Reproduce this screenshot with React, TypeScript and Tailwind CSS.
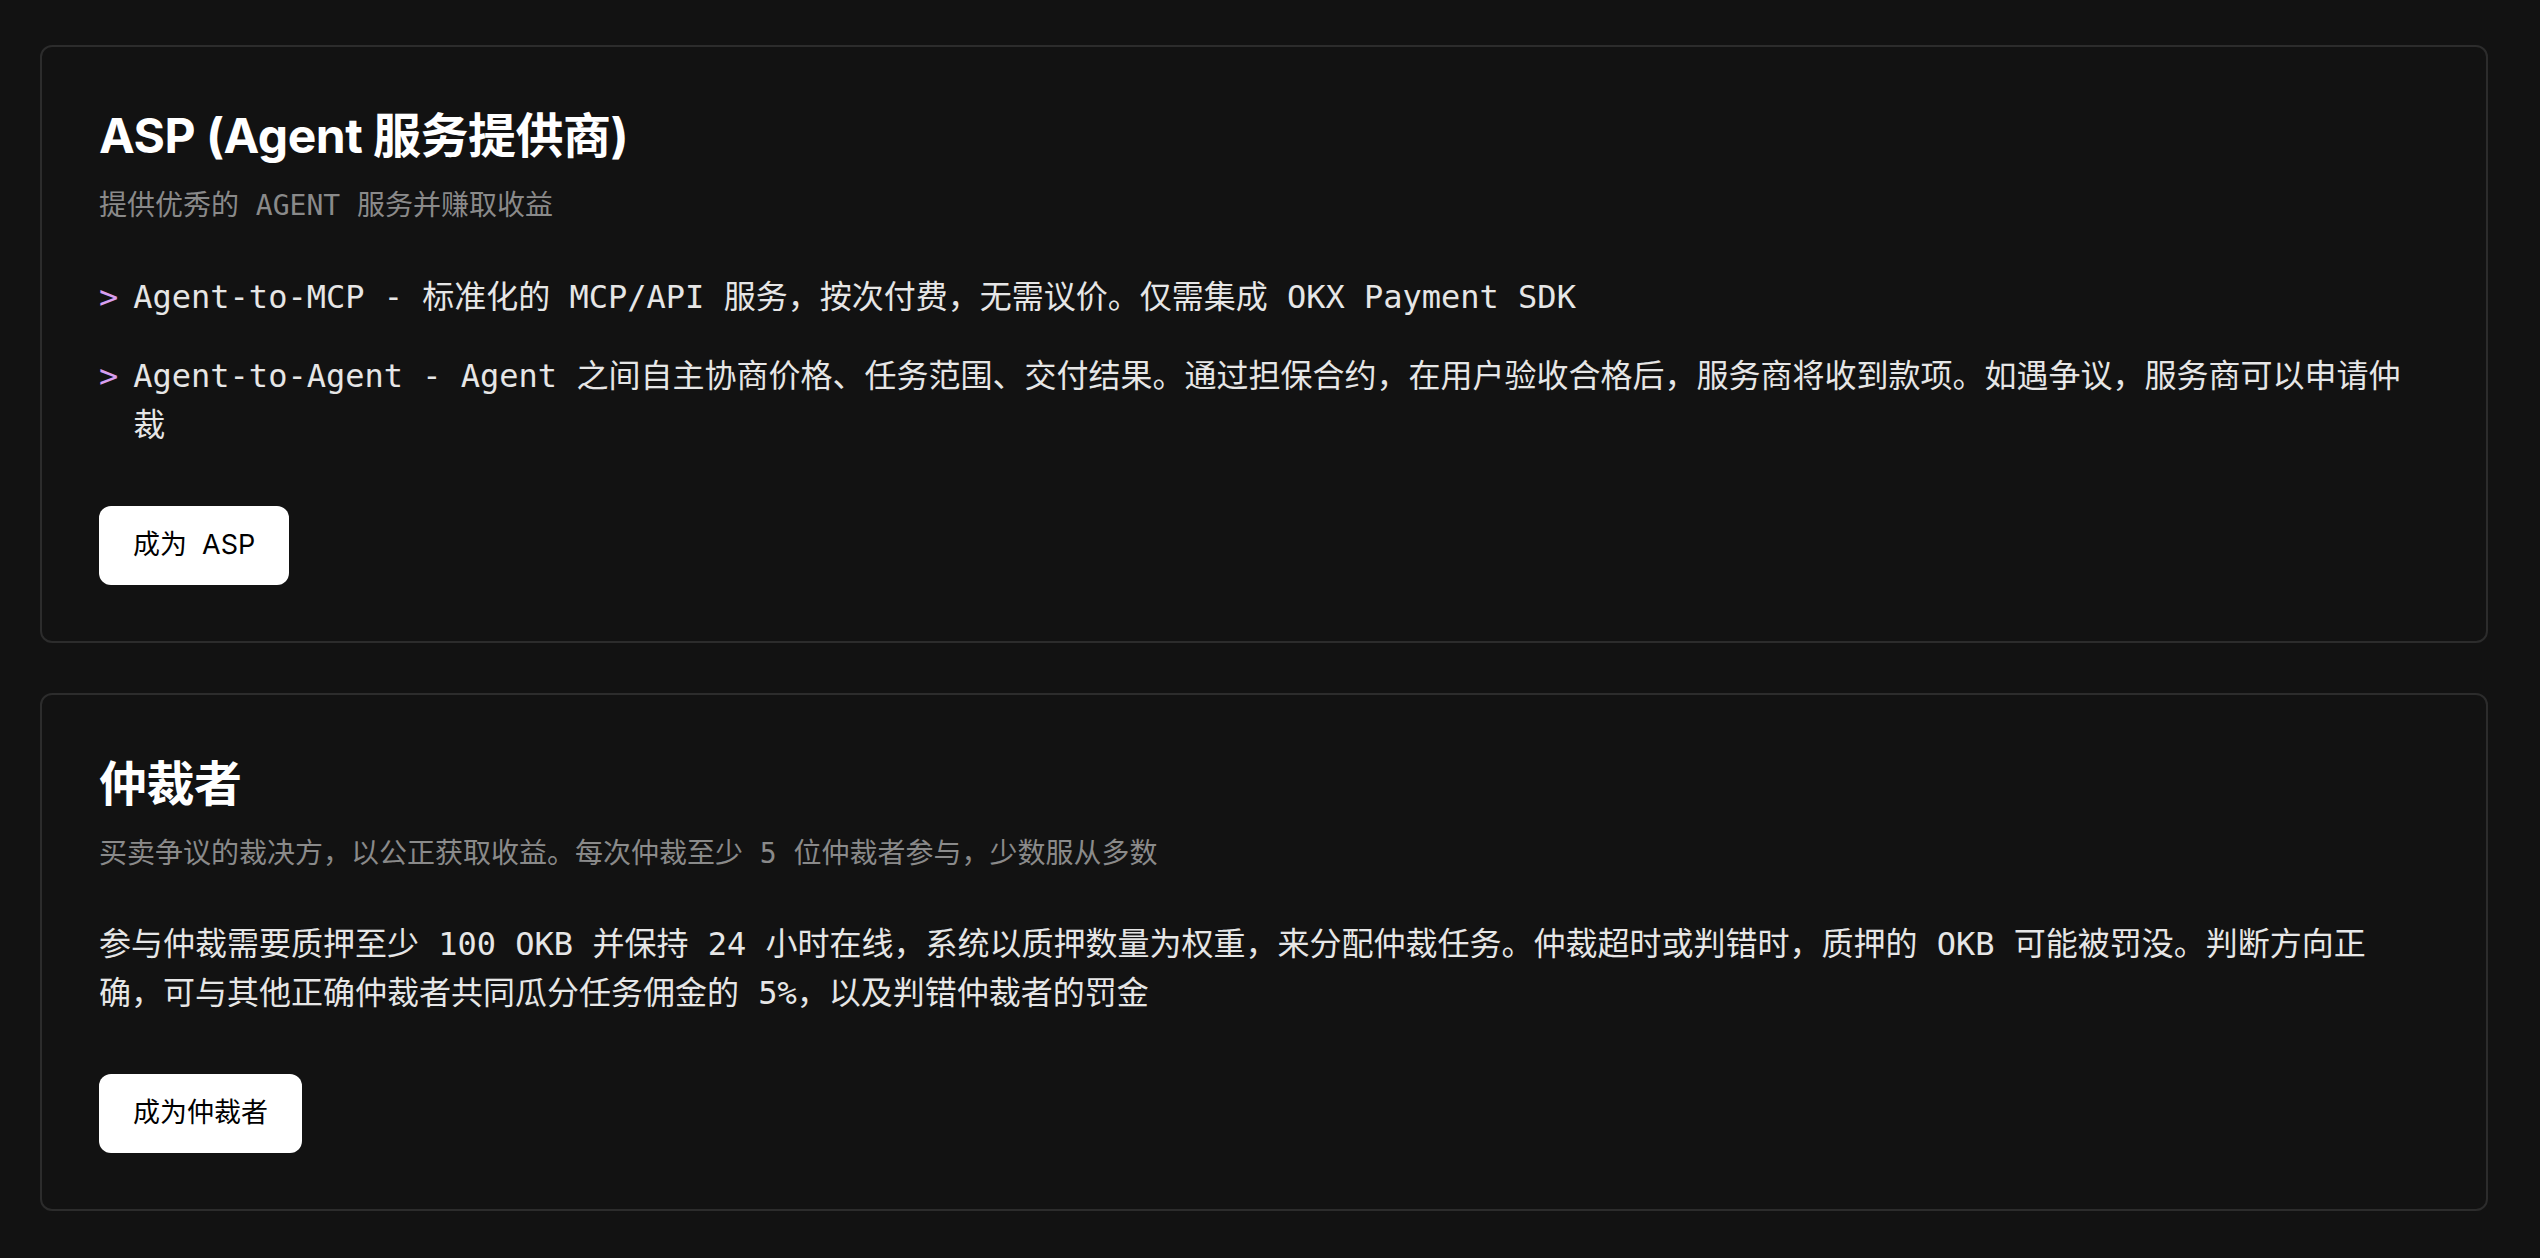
import React from "react";

interface RoleCardProps {
  title: string;
  subtitle: string;
  action: React.ReactNode;
  children: React.ReactNode;
}

function RoleCard({ title, subtitle, action, children }: RoleCardProps) {
  return (
    <section className="rounded-[12px] border-2 border-[#2c2c2c] px-[57px] pt-[56px] pb-[56px]">
      <h2 className="font-[Inter,'Noto_Sans_CJK_SC',sans-serif] text-[48px] leading-[66px] font-bold text-white tracking-[-0.5px]">
        {title}
      </h2>
      <p className="mt-[16px] font-['DejaVu_Sans_Mono','Noto_Sans_CJK_SC',monospace] text-[28px] leading-[42px] text-[#8a8a8a]">
        {subtitle}
      </p>
      {children}
      <button className="mt-[56px] h-[79px] px-[34px] rounded-[12px] bg-white text-black text-[27px] flex items-center gap-[15px] font-[Inter,'Noto_Sans_CJK_SC',sans-serif]">
        {action}
      </button>
    </section>
  );
}

const modes = [
  {
    name: "Agent-to-MCP",
    text: "标准化的 MCP/API 服务，按次付费，无需议价。仅需集成 OKX Payment SDK",
  },
  {
    name: "Agent-to-Agent",
    text: "Agent 之间自主协商价格、任务范围、交付结果。通过担保合约，在用户验收合格后，服务商将收到款项。如遇争议，服务商可以申请仲裁",
  },
];

export default function App() {
  return (
    <div className="min-h-screen bg-[#121212] pl-[40px] pr-[52px] pt-[45px] pb-[48px] flex flex-col gap-[50px]">
      <RoleCard
        title="ASP (Agent 服务提供商)"
        subtitle="提供优秀的 AGENT 服务并赚取收益"
        action={
          <>
            <span>成为</span>
            <span>ASP</span>
          </>
        }
      >
        <ul className="mt-[46px] flex flex-col gap-[30px] font-['DejaVu_Sans_Mono','Noto_Sans_CJK_SC',monospace]">
          {modes.map((m) => (
            <li key={m.name} className="flex gap-[15px] text-[32px] leading-[49px] text-[#e6e6e6]">
              <span className="text-[#d89ff0] shrink-0">&gt;</span>
              <span>
                {m.name} - {m.text}
              </span>
            </li>
          ))}
        </ul>
      </RoleCard>

      <RoleCard
        title="仲裁者"
        subtitle="买卖争议的裁决方，以公正获取收益。每次仲裁至少 5 位仲裁者参与，少数服从多数"
        action="成为仲裁者"
      >
        <p className="mt-[45px] font-['DejaVu_Sans_Mono','Noto_Sans_CJK_SC',monospace] text-[32px] leading-[49px] text-[#e6e6e6]">
          参与仲裁需要质押至少 100 OKB 并保持 24 小时在线，系统以质押数量为权重，来分配仲裁任务。仲裁超时或判错时，质押的 OKB 可能被罚没。判断方向正确，可与其他正确仲裁者共同瓜分任务佣金的 5%，以及判错仲裁者的罚金
        </p>
      </RoleCard>
    </div>
  );
}
